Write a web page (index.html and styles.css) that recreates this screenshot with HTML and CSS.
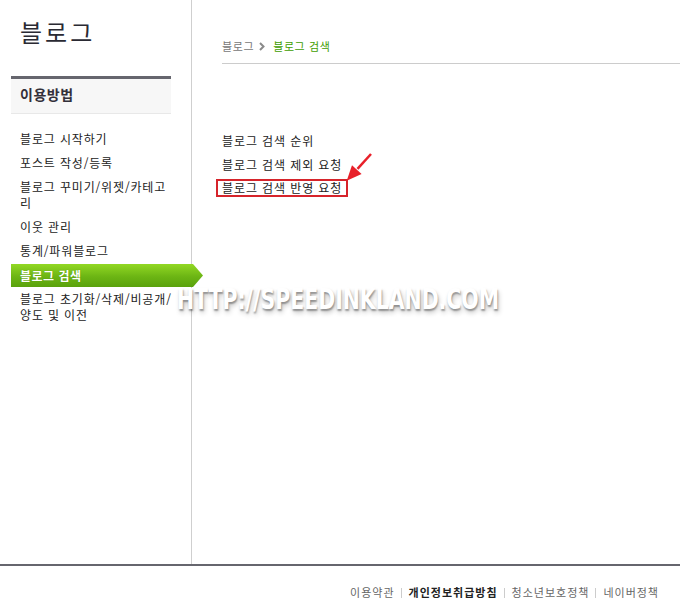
FILE: index.html
```html
<!DOCTYPE html>
<html lang="ko">
<head>
<meta charset="utf-8">
<title>블로그 검색</title>
<link rel="stylesheet" href="styles.css">
</head>
<body>
<div class="page">
  <aside class="sidebar">
    <h1 class="title">블로그</h1>
    <div class="side-head">이용방법</div>
    <ul class="menu">
      <li>블로그 시작하기</li>
      <li>포스트 작성/등록</li>
      <li>블로그 꾸미기/위젯/카테고리</li>
      <li>이웃 관리</li>
      <li>통계/파워블로그</li>
      <li class="active">블로그 검색</li>
      <li>블로그 초기화/삭제/비공개/양도 및 이전</li>
    </ul>
  </aside>
  <main class="main">
    <div class="crumb">
      <span class="crumb-home">블로그</span>
      <svg class="chev" width="6" height="9" viewBox="0 0 6 9"><path d="M1 1 L4.5 4.5 L1 8" fill="none" stroke="#8a8a8a" stroke-width="2"/></svg>
      <span class="crumb-cur">블로그 검색</span>
    </div>
    <ul class="links">
      <li><a>블로그 검색 순위</a></li>
      <li><a>블로그 검색 제외 요청</a></li>
      <li class="boxed"><a>블로그 검색 반영 요청</a></li>
    </ul>
  </main>
</div>
<footer class="footer">
  <a class="f-link">이용약관</a><span class="sep"></span><a class="f-link strong">개인정보취급방침</a><span class="sep"></span><a class="f-link">청소년보호정책</a><span class="sep"></span><a class="f-link">네이버정책</a>
</footer>
<svg class="red-arrow" width="40" height="40" viewBox="0 0 40 40">
  <line x1="31" y1="4" x2="17.5" y2="18.8" stroke="#e8202a" stroke-width="2.5"/>
  <polygon points="6.7,30.7 12,15.2 21.6,24" fill="#e8202a"/>
</svg>
<div class="watermark">HTTP://SPEEDINKLAND.COM</div>
</body>
</html>
```
FILE: styles.css
```css
html, body {
  margin: 0;
  padding: 0;
  background: #fff;
}
body {
  font-family: "Noto Sans CJK KR", "Noto Sans", sans-serif;
  color: #222;
  position: relative;
  width: 680px;
  height: 600px;
  overflow: hidden;
}
ul {
  list-style: none;
  margin: 0;
  padding: 0;
}
.page {
  display: flex;
  height: 564px;
}
.sidebar {
  width: 180px;
  padding-left: 11px;
  border-right: 1px solid #cfcfcf;
  flex: none;
}
.title {
  margin: 0;
  padding: 18px 0 0 9px;
  font-size: 24px;
  line-height: 28px;
  font-weight: normal;
  letter-spacing: 3px;
  color: #2a2a33;
}
.side-head {
  width: 151px;
  margin-top: 30px;
  border-top: 3px solid #66666e;
  border-bottom: 1px solid #e8e8e8;
  background: #f7f7f7;
  height: 30px;
  padding: 0 0 4px 9px;
  line-height: 30px;
  font-size: 14px;
  font-weight: bold;
  letter-spacing: 0.5px;
  color: #33303a;
}
.menu {
  width: 162px;
  margin-top: 13px;
}
.menu li {
  padding: 4px 0 4px 9px;
  font-size: 12px;
  line-height: 16px;
  letter-spacing: 0.85px;
  color: #222;
}
.menu li.active {
  margin-right: -30px;
  padding-top: 4px;
  padding-bottom: 3px;
  margin-top: 1px;
  color: #fff;
  font-weight: bold;
  letter-spacing: 0.5px;
  background: linear-gradient(#92d824, #6cb514 55%, #5aa20c);
  clip-path: polygon(0 0, calc(100% - 10px) 0, 100% 50%, calc(100% - 10px) 100%, 0 100%);
  text-shadow: 0 0 1px rgba(60, 110, 0, 0.6);
}
.main {
  flex: 1;
  padding-left: 30px;
}
.crumb {
  padding: 38px 0 9px;
  border-bottom: 1px solid #cccccc;
  font-size: 11px;
  line-height: 16px;
  letter-spacing: 0.6px;
  display: flex;
  align-items: center;
}
.crumb-home {
  color: #777;
}
.chev {
  margin: 0 8px 0 5px;
}
.crumb-cur {
  color: #3f9d00;
}
.links {
  margin-top: 69px;
}
.links li {
  font-size: 12px;
  line-height: 16px;
  letter-spacing: 0.9px;
  margin-bottom: 7.5px;
  color: #222;
}
.links li.boxed {
  height: 16px;
}
.links li.boxed a {
  display: inline-block;
  margin: -1px 0 0 -6px;
  padding: 0 4px 0 4px;
  border: 2px solid #d6242b;
  line-height: 14px;
  vertical-align: top;
}
.footer {
  border-top: 2px solid #66666e;
  padding: 19px 21px 0 0;
  text-align: right;
  font-size: 11px;
  line-height: 14px;
  letter-spacing: 1px;
  color: #666;
}
.f-link.strong {
  font-weight: bold;
  color: #222;
}
.sep {
  display: inline-block;
  width: 1px;
  height: 10px;
  background: #cccccc;
  margin: 0 7px 0 6px;
  vertical-align: -1px;
}
.red-arrow {
  position: absolute;
  left: 340px;
  top: 150px;
}
.watermark {
  position: absolute;
  left: 177px;
  top: 284px;
  font-family: "DejaVu Sans", sans-serif;
  font-weight: bold;
  font-size: 28px;
  line-height: 32px;
  color: #fff;
  white-space: nowrap;
  transform-origin: 0 0;
  transform: scaleX(0.73);
  text-shadow: 1px 2px 2px rgba(0, 0, 0, 0.35), 2px 4px 6px rgba(0, 0, 0, 0.2);
}
```
